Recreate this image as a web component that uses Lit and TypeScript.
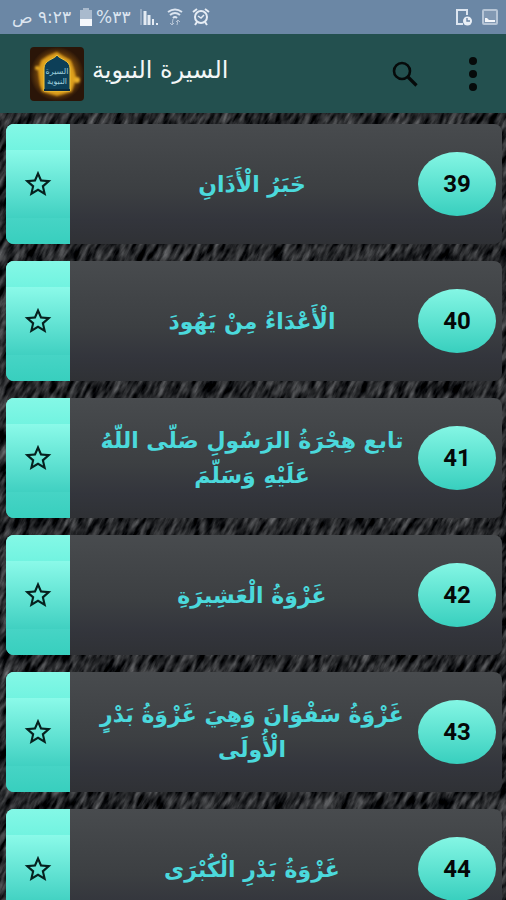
import { LitElement, html, css } from "lit";
import { customElement, property, state } from "lit/decorators.js";

interface Chapter {
  id: number;
  title: string;
}

const chapters: Chapter[] = [
  { id: 39, title: "خَبَرُ الْأَذَانِ" },
  { id: 40, title: "الْأَعْدَاءُ مِنْ يَهُودَ" },
  { id: 41, title: "تابع هِجْرَةُ الرَسُولِ صَلّى اللّهُ عَلَيْهِ وَسَلّمَ" },
  { id: 42, title: "غَزْوَةُ الْعَشِيرَةِ" },
  { id: 43, title: "غَزْوَةُ سَفْوَانَ وَهِيَ غَزْوَةُ بَدْرٍ الْأُولَى" },
  { id: 44, title: "غَزْوَةُ بَدْرِ الْكُبْرَى" },
];

@customElement("status-bar")
class StatusBar extends LitElement {
  static styles = css`
    :host {
      display: flex;
      align-items: center;
      justify-content: space-between;
      height: 34px;
      padding: 0 8px 0 12px;
      background: #6b87a5;
      color: #dce5f0;
      font: 17px/34px "DejaVu Sans", sans-serif;
    }
    .group {
      display: flex;
      align-items: center;
      gap: 9px;
    }
    .battery {
      display: flex;
      align-items: center;
      gap: 4px;
    }
    svg {
      display: block;
    }
  `;
  render() {
    return html`
      <div class="group">
        <span dir="rtl">٩:٢٣ ص</span>
        <span class="battery">
          <svg width="12" height="18" viewBox="0 0 12 18">
            <path d="M3 0h6v2h3v10H0V2h3z" fill="#a9bacd" />
            <path d="M0 11h12v7H0z" fill="#f4f7fb" />
          </svg>
          <span dir="ltr">%٣٣</span>
        </span>
        <svg width="18" height="18" viewBox="0 0 18 18">
          <path d="M1 1v16" stroke="#93a8c0" stroke-width="2" />
          <path d="M5 3v14M9 7v10" stroke="#e4ebf3" stroke-width="3" />
          <path d="M13 11v6M17 15v2" stroke="#e4ebf3" stroke-width="2" />
        </svg>
        <svg width="16" height="18" viewBox="0 0 16 18" fill="none" stroke="#dce5f0" stroke-width="2">
          <path d="M1 4q7-5 14 0M3 7q5-4 10 0M6 10q2-2 4 0" />
          <path d="M6 11l-1 6M3 15l2 2 2-2M10 17l1-5M9 14l2-2 2 2" stroke-width="1" stroke="#b6c5d6" />
        </svg>
        <svg width="18" height="18" viewBox="0 0 18 18" fill="none" stroke="#e6edf5" stroke-width="2">
          <circle cx="9" cy="9" r="6" />
          <path d="M6 8l3 2 3-3" stroke-width="1.500" />
          <path d="M1 4l4-3M17 4l-4-3M5 14l-2 3M13 14l2 3" />
        </svg>
      </div>
      <div class="group">
        <svg width="18" height="18" viewBox="0 0 18 18" fill="none">
          <path d="M12 7V2H2v14h6" stroke="#dce5f0" stroke-width="2" />
          <circle cx="12.500" cy="13" r="4.500" fill="#e9eff6" />
          <path d="M12 10v3h3" stroke="#6b87a5" stroke-width="1.400" />
        </svg>
        <svg width="16" height="16" viewBox="0 0 16 16">
          <rect x="1" y="1" width="14" height="14" rx="1" fill="#8299b3" stroke="#b6c5d6" stroke-width="2" />
          <path d="M3 13V9l2 0 2 2 6 0v2z" fill="#f4f7fb" />
        </svg>
      </div>
    `;
  }
}

@customElement("app-emblem")
class AppEmblem extends LitElement {
  static styles = css`
    :host,
    svg {
      display: block;
    }
    text {
      font: 8px "DejaVu Sans", sans-serif;
    }
  `;
  render() {
    return html`
      <svg width="54" height="54" viewBox="0 0 54 54" role="img" aria-label="السيرة النبوية">
        <defs>
          <radialGradient id="glow">
            <stop offset="0.500" stop-color="#c08212" />
            <stop offset="0.720" stop-color="#6a3f0c" />
            <stop offset="1" stop-color="#2a1508" />
          </radialGradient>
          <filter id="soft"><feGaussianBlur stdDeviation="1" /></filter>
        </defs>
        <rect width="54" height="54" rx="4" fill="url(#glow)" />
        <g filter="url(#soft)">
          <path
            d="M27 6l6 4 7 4 3 9 2 7-2 8-2 6-14 4-14-4-2-6-1-8-1-7 3-9 6-4z"
            fill="#e0a31c"
            stroke="#d4961a"
            stroke-width="2"
          />
          <circle cx="7" cy="21" r="2" fill="#f0b325" />
          <circle cx="47" cy="33" r="3" fill="#eab02a" />
        </g>
        <path d="M27 8c2 4 13 5 13 13v23H14V21C14 13 25 12 27 8z" fill="#0d3f58" stroke="#f2c43c" />
        <path d="M14 43h26" stroke="#0a2c40" stroke-width="2" />
        <text x="27" y="27" text-anchor="middle" fill="#9fd0dd" direction="rtl">السيرة</text>
        <text x="27" y="37" text-anchor="middle" fill="#9fd0dd" direction="rtl">النبوية</text>
      </svg>
    `;
  }
}

@customElement("app-bar")
class AppBar extends LitElement {
  static styles = css`
    :host {
      display: flex;
      align-items: center;
      height: 79px;
      padding: 0 16px 0 30px;
      background: #23504f;
    }
    h1 {
      flex: 1;
      margin: 0 0 0 8px;
      padding-bottom: 8px;
      color: #f3f7f7;
      font: 24px/40px "DejaVu Sans", sans-serif;
      text-align: left;
    }
    button {
      display: grid;
      place-items: center;
      width: 34px;
      height: 44px;
      margin-left: 34px;
      padding: 0;
      border: 0;
      background: none;
    }
  `;
  render() {
    return html`
      <app-emblem></app-emblem>
      <h1 dir="rtl">السيرة النبوية</h1>
      <button aria-label="بحث">
        <svg width="26" height="26" viewBox="0 0 26 26" fill="none" stroke="#060a0a">
          <circle cx="10" cy="10" r="8" stroke-width="2.600" />
          <path d="M15.500 15.500l9 9" stroke-width="3.200" />
        </svg>
      </button>
      <button aria-label="المزيد">
        <svg width="8" height="34" viewBox="0 0 8 34" fill="#060a0a">
          <circle cx="4" cy="4" r="4" />
          <circle cx="4" cy="17" r="4" />
          <circle cx="4" cy="30" r="4" />
        </svg>
      </button>
    `;
  }
}

@customElement("chapter-card")
class ChapterCard extends LitElement {
  @property({ attribute: false }) chapter!: Chapter;
  @state() private starred = false;

  static styles = css`
    :host {
      display: flex;
      align-items: stretch;
      min-height: 120px;
      border-radius: 8px;
      overflow: hidden;
      background: linear-gradient(#484b4e, #3c3f42 55%, #33353c 80%, #2f3135);
    }
    .star {
      display: grid;
      place-items: center;
      flex: none;
      width: 64px;
      padding: 0;
      border: 0;
      background:
        linear-gradient(#84f8e6, #72f3e0) top / 100% 26px no-repeat,
        linear-gradient(#46d4c5, #38cfbe) bottom / 100% 26px no-repeat,
        linear-gradient(#8dfbea 20%, #3ecfc0 80%);
    }
    .title {
      flex: 1;
      align-self: center;
      margin: 0;
      padding: 0 4px 0 20px;
      color: #4bd9dc;
      font: bold 22px/35px "DejaVu Sans", sans-serif;
      text-align: center;
    }
    .number {
      display: grid;
      place-items: center;
      flex: none;
      align-self: center;
      width: 78px;
      height: 64px;
      margin-right: 6px;
      border-radius: 50%;
      background: linear-gradient(#84f6e4, #38cfbe);
      color: #050808;
      font: bold 24px/28px Roboto, sans-serif;
    }
  `;
  render() {
    return html`
      <button class="star" aria-label="المفضلة" aria-pressed=${this.starred} @click=${() => (this.starred = !this.starred)}>
        <svg width="32" height="32" viewBox="0 0 24 24" fill="#06211f">
          <path
            d=${this.starred
              ? "M12 17.270L18.180 21l-1.640-7.030L22 9.240l-7.190-.61L12 2 9.190 8.630 2 9.240l5.460 4.730L5.820 21z"
              : "M22 9.240l-7.190-.62L12 2 9.190 8.630 2 9.240l5.460 4.730L5.820 21 12 17.270 18.180 21l-1.630-7.030L22 9.240zM12 15.400l-3.760 2.270 1-4.280-3.320-2.880 4.380-.38L12 6.100l1.710 4.040 4.380.38-3.320 2.880 1 4.280L12 15.400z"}
          />
        </svg>
      </button>
      <h2 class="title" dir="rtl">${this.chapter.title}</h2>
      <span class="number">${this.chapter.id}</span>
    `;
  }
}

@customElement("app-root")
class AppRoot extends LitElement {
  static styles = css`
    :host {
      display: flex;
      flex-direction: column;
      height: 100vh;
      overflow: hidden;
      background: #1c1e20;
    }
    main {
      position: relative;
      flex: 1;
      min-height: 0;
      overflow: hidden;
    }
    .texture {
      position: absolute;
      inset: 0;
      width: 100%;
      height: 100%;
    }
    ul {
      position: relative;
      display: flex;
      flex-direction: column;
      gap: 17px;
      margin: 0;
      padding: 11px 4px 11px 6px;
      list-style: none;
    }
  `;
  render() {
    return html`
      <status-bar></status-bar>
      <app-bar></app-bar>
      <main>
        <svg class="texture" aria-hidden="true">
          <filter id="rock" x="0" y="0" width="100%" height="100%" color-interpolation-filters="sRGB">
            <feTurbulence type="fractalNoise" baseFrequency="0.170 0.060" numOctaves="3" seed="7" />
            <feColorMatrix values="0.7 0 0 0 -0.21  0.7 0 0 0 -0.205  0.7 0 0 0 -0.195  0 0 0 0 1" />
          </filter>
          <g transform="skewX(-25)"><rect width="200%" height="100%" filter="url(#rock)" /></g>
        </svg>
        <ul>
          ${chapters.map((c) => html`<li><chapter-card .chapter=${c}></chapter-card></li>`)}
        </ul>
      </main>
    `;
  }
}
